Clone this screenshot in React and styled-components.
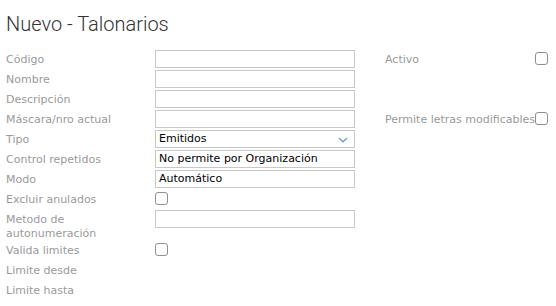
import React from 'react';
import styled, { createGlobalStyle } from 'styled-components';

const Global = createGlobalStyle`
    body {
        margin: 0;
        background: #fff;
        font-family: "DejaVu Sans", Verdana, sans-serif;
    }
`;

const Page = styled.div`
    padding: 0 6px;
`;
const Title = styled.h1`
    margin: 0;
    padding-top: 12px;
    height: 50px;
    box-sizing: border-box;
    font-family: Roboto, "Open Sans", sans-serif;
    font-weight: 300;
    font-size: 20px;
    line-height: 24px;
    color: #333;
`;
const Form = styled.div`
    display: flex;
    gap: 30px;
`;
const Column = styled.div`
    display: flex;
    flex-direction: column;
`;
const Row = styled.div`
    display: flex;
    align-items: flex-start;
    min-height: 20px;
`;
const Label = styled.div`
    width: ${p => p.w}px;
    padding-top: 3px;
    padding-right: ${p => p.pr || 0}px;
    font-size: 11px;
    line-height: 14px;
    color: #9a9a9a;
    white-space: ${p => (p.nowrap ? 'nowrap' : 'normal')};
`;
const Input = styled.div`
    position: relative;
    width: 200px;
    height: 18px;
    box-sizing: border-box;
    border: 1px solid #c8c8c8;
    padding: 0 3px;
    font-size: 11px;
    line-height: 16px;
    color: #000;
`;
const Arrow = styled.svg`
    position: absolute;
    right: 6px;
    top: 6px;
`;
const Check = styled.div`
    width: 13px;
    height: 13px;
    box-sizing: border-box;
    margin-top: 2px;
    border: 1px solid #8f8f8f;
    border-radius: 3px;
    background: #fff;
`;

const Select = ({ value }) => (
    <Input>
        {value}
        <Arrow width="10" height="6" viewBox="0 0 10 6">
            <path d="M1 1 L5 4.8 L9 1" fill="none" stroke="#6a9ad8" strokeWidth="1.3" />
        </Arrow>
    </Input>
);

const LeftRow = ({ label, children }) => (
    <Row>
        <Label w={134} pr={15}>{label}</Label>
        {children}
    </Row>
);

export default function App() {
    return (
        <Page>
            <Global />
            <Title>Nuevo - Talonarios</Title>
            <Form>
                <Column>
                    <LeftRow label="Código"><Input /></LeftRow>
                    <LeftRow label="Nombre"><Input /></LeftRow>
                    <LeftRow label="Descripción"><Input /></LeftRow>
                    <LeftRow label="Máscara/nro actual"><Input /></LeftRow>
                    <LeftRow label="Tipo"><Select value="Emitidos" /></LeftRow>
                    <LeftRow label="Control repetidos"><Input>No permite por Organización</Input></LeftRow>
                    <LeftRow label="Modo"><Input>Automático</Input></LeftRow>
                    <LeftRow label="Excluir anulados"><Check /></LeftRow>
                    <LeftRow label="Metodo de autonumeración"><Input /></LeftRow>
                    <LeftRow label="Valida limites"><Check /></LeftRow>
                    <LeftRow label="Limite desde" />
                    <LeftRow label="Limite hasta" />
                </Column>
                <Column>
                    <Row><Label w={150} nowrap>Activo</Label><Check /></Row>
                    <Row />
                    <Row />
                    <Row><Label w={150} nowrap>Permite letras modificables</Label><Check /></Row>
                </Column>
            </Form>
        </Page>
    );
}
